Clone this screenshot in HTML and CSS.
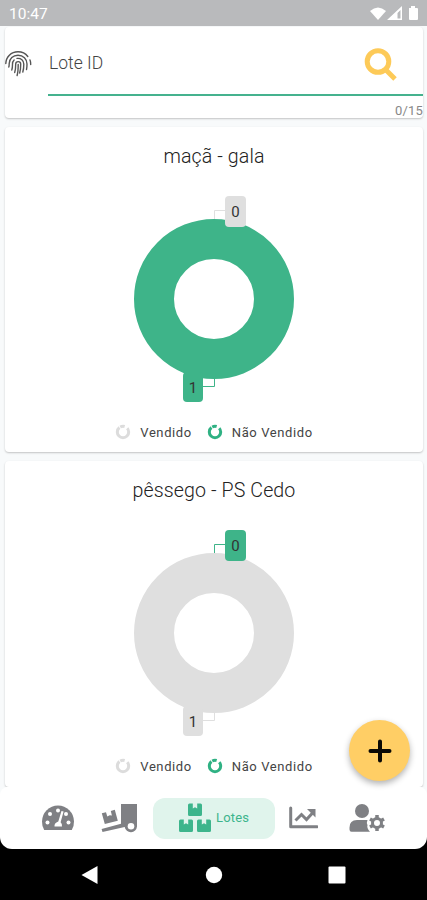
FILE: index.html
```html
<!DOCTYPE html>
<html lang="pt">
<head>
<meta charset="utf-8">
<title>Lotes</title>
<link rel="stylesheet" href="styles.css">
</head>
<body>
<header class="status">
  <span>10:47</span>
  <svg width="50" height="18" viewBox="0 0 50 18" fill="#fff">
    <path d="M0 6Q8 -1 16 6L8 15Z"/>
    <path fill-rule="evenodd" d="M32 1V15H17ZM30.500 5L27.500 8V13.500H30.500Z"/>
    <path d="M39 3h2V1h4v2h2q1 0 1 1v10q0 1-1 1h-7q-1 0-1-1z"/>
  </svg>
</header>
<main class="content">
  <section class="card search">
    <svg class="finger" width="27" height="28" viewBox="0 0 27 28" fill="none" stroke="#555" stroke-width="1.400" stroke-linecap="round">
      <path d="M.8 13.500C1 7 6 1.800 13 1.800c4.500 0 7.700 1.900 9.800 4.700M25 10c.6 1.500.7 3 .7 4.500M3.800 17c.4-1 .4-2 .4-3.500C4.400 8.700 8 5.200 13 5.200c5.200 0 9 3.600 9 8.800 0 2-.1 3.700-.5 5.500M6.800 20c.7-2 .7-4 .7-6 0-1.500.6-2.900 1.600-3.900M12 8.400c4-.5 6.800 2 6.800 5.600 0 3-.2 5.500-1 8M9.700 22.500c.9-2.500 1-5 1-8.500 0-3.200 5-3.200 5 0 0 3.500-.1 6-1 9M13.200 14.500c0 4-.1 7.500-1.100 11"/>
    </svg>
    <div class="field">
      <div class="input"><span>Lote ID</span>
        <svg width="34" height="34" viewBox="0 0 34 34" fill="none" stroke="#fdca58">
          <circle cx="14" cy="13.500" r="10.800" stroke-width="5"/>
          <path d="M22 22L31 31" stroke-width="5"/>
        </svg>
      </div>
      <div class="count">0/15</div>
    </div>
  </section>
  <section class="card lot">
    <h2>maçã - gala</h2>
    <svg class="chart green" width="200" height="220" viewBox="0 0 200 220">
      <circle class="ring" cx="100" cy="109" r="60"/>
      <path class="link top" d="M100.500 29V20.500H111"/>
      <path class="link bottom" d="M100.500 189V196.500H89"/>
      <rect class="tag top" x="111" y="6" width="21" height="31" rx="4"/>
      <rect class="tag bottom" x="69" y="182" width="20" height="30" rx="4"/>
      <text x="121.500" y="26.500">0</text><text x="79" y="202.500">1</text>
    </svg>
    <div class="legend">
      <svg class="off" width="16" height="16" viewBox="0 0 16 16"><circle cx="8" cy="8" r="5.700"/></svg><span class="sold">Vendido</span>
      <svg class="on" width="16" height="16" viewBox="0 0 16 16"><circle cx="8" cy="8" r="5.700"/></svg><span>Não Vendido</span>
    </div>
  </section>
  <section class="card lot">
    <h2>pêssego - PS Cedo</h2>
    <svg class="chart gray" width="200" height="220" viewBox="0 0 200 220">
      <circle class="ring" cx="100" cy="109" r="60"/>
      <path class="link top" d="M100.500 29V20.500H111"/>
      <path class="link bottom" d="M100.500 189V196.500H89"/>
      <rect class="tag top" x="111" y="6" width="21" height="31" rx="4"/>
      <rect class="tag bottom" x="69" y="182" width="20" height="30" rx="4"/>
      <text x="121.500" y="26.500">0</text><text x="79" y="202.500">1</text>
    </svg>
    <div class="legend">
      <svg class="off" width="16" height="16" viewBox="0 0 16 16"><circle cx="8" cy="8" r="5.700"/></svg><span class="sold">Vendido</span>
      <svg class="on" width="16" height="16" viewBox="0 0 16 16"><circle cx="8" cy="8" r="5.700"/></svg><span>Não Vendido</span>
    </div>
  </section>
</main>
<button class="fab" aria-label="Adicionar">
  <svg width="24" height="24" viewBox="0 0 24 24"><path d="M12 2.500V21.500M2.500 12H21.500" stroke="#0b0905" stroke-width="4" stroke-linecap="round"/></svg>
</button>
<footer class="bottom-area">
  <nav class="tabs">
    <svg width="32" height="26" viewBox="0 0 32 26">
      <path fill="#7f8084" d="M2.200 25Q0 22 0 16.500A16 16 0 0 1 32 16.500Q32 22 29.800 25Z"/>
      <g fill="#fff"><circle cx="5.500" cy="17.500" r="2"/><circle cx="8" cy="9" r="2"/><circle cx="16" cy="5.500" r="2"/><circle cx="24" cy="9" r="2"/><circle cx="26.500" cy="17.500" r="2"/><path d="M19.500 6L21.600 6.600 18.600 17.200Q20.300 18.600 20 21.500H12.500Q12 18 16.300 16.500Z"/></g>
    </svg>
    <svg class="truck" width="37" height="30" viewBox="0 0 37 30" fill="#7f8084">
      <path d="M20 1h16v22.500a6.200 6.200 0 0 1-12.300.5L1.500 29 .6 26 20 20.700Z"/><circle cx="30" cy="23.300" r="3.300" fill="#fff"/>
      <path d="M.8 10.300L5 9.200l1.300 4.300 2.400-1.200 2.200.2-1.100-4.600 4-1.100 3 10.900L3.800 21Z"/>
    </svg>
    <div class="active">
      <svg width="33" height="30" viewBox="0 0 33 30" fill="#3db58c">
        <path id="box" d="M10.500.5h3.300v5l2.200-1.300 2.200 1.300v-5h3.300q1.500 0 1.500 1.500v9.500q0 1.500-1.500 1.500h-11Q9 13 9 11.500V2Q9 .5 10.500.5Z"/>
        <use href="#box" x="-9" y="16"/><use href="#box" x="9" y="16"/>
      </svg>
      <span>Lotes</span>
    </div>
    <svg class="trend" width="29" height="24" viewBox="0 0 29 24" fill="none" stroke="#7f8084" stroke-width="3">
      <path d="M1.700 2V20.700H28" stroke-linecap="round" stroke-linejoin="round"/><path d="M6.500 14.500L12.500 8.500 17.500 13.500 24 6.500"/><path d="M18 3h8.500v8.500Z" fill="#7f8084" stroke="none"/>
    </svg>
    <svg class="user" width="36" height="30" viewBox="0 0 36 30">
      <g fill="#7f8084"><circle cx="13" cy="8" r="7"/><path d="M8 17h10.500q-1.200 2.500 0 5-1 3 2.500 6.700H2.500Q.5 28.700.5 26.500V24.500Q.5 17 8 17Z"/></g>
      <circle cx="28" cy="20" r="8.500" fill="#fff"/>
      <circle cx="28" cy="20" r="4.500" fill="none" stroke="#7f8084" stroke-width="3"/>
      <path d="M28 12v3M28 25v3M21 16l2.700 1.500M32.300 22.500L35 24M21 24l2.700-1.500M32.300 17.500L35 16" stroke="#7f8084" stroke-width="3.500"/>
    </svg>
  </nav>
  <div class="system">
    <svg width="18" height="20" viewBox="0 0 18 20"><path d="M.5 10L16.500 1V19Z" fill="#fff"/></svg>
    <svg width="18" height="18" viewBox="0 0 18 18"><circle cx="9" cy="9" r="8.200" fill="#fff"/></svg>
    <svg width="18" height="18" viewBox="0 0 18 18"><rect x=".5" y=".5" width="17" height="17" rx="1" fill="#fff"/></svg>
  </div>
</footer>
</body>
</html>
```
FILE: styles.css
```css
* { box-sizing: border-box; }
body {
  margin: 0;
  width: 427px;
  height: 900px;
  overflow: hidden;
  position: relative;
  display: flex;
  flex-direction: column;
  background: #f8fafb;
  font-family: Roboto, "Liberation Sans", sans-serif;
  font-weight: 400;
  color: #444;
}
svg { display: block; flex: none; }
.status {
  height: 26px;
  flex: none;
  background: #b9babc;
  color: #fff;
  display: flex;
  justify-content: space-between;
  align-items: center;
  padding: 2px 7px 0 9px;
  font-size: 15.5px;
}
.status svg { margin-top: -1px; }
.content {
  height: 761px;
  flex: none;
  padding: 1px 4px 0 5px;
  display: flex;
  flex-direction: column;
  gap: 9px;
}
.card {
  background: #fff;
  border-radius: 4px;
  box-shadow: 0 1px 2px rgba(0, 0, 0, 0.22);
  flex: none;
}
.search { height: 91px; display: flex; }
.finger { margin: 23px 16px 0 0; }
.field { flex: 1; }
.input {
  height: 69px;
  border-bottom: 2px solid #45b28e;
  display: flex;
  justify-content: space-between;
  padding: 0 25px 0 0;
  font-size: 17.5px;
  font-weight: 300;
}
.input span { line-height: 20px; margin: 26px 0 0 1px; }
.input svg { margin-top: 21px; }
.count { text-align: right; font-size: 13px; line-height: 16px; margin-top: 7px; color: #888; letter-spacing: 0.2px; }
.lot { height: 325px; display: flex; flex-direction: column; align-items: center; }
.lot + .lot { height: 326px; }
h2 { margin: 17px 0 0; height: 26px; line-height: 26px; font-size: 19.6px; font-weight: 300; letter-spacing: 0.1px; color: #222; }
.chart { margin-top: 20px; }
.ring { fill: none; stroke-width: 40; }
.link { fill: none; stroke-width: 1; }
.chart text { font-size: 15px; text-anchor: middle; fill: #333; }
.green .ring, .green .link.bottom, .gray .link.top { stroke: #3eb489; }
.green .tag.bottom, .gray .tag.top { fill: #3eb489; }
.gray .ring, .gray .link.bottom, .green .link.top { stroke: #dfdfdf; }
.gray .tag.bottom, .green .tag.top { fill: #dfdfdf; }
.legend { height: 20px; margin-top: 12px; display: flex; align-items: center; font-size: 13px; letter-spacing: 0.6px; }
.legend svg { margin-right: 9px; fill: none; stroke-width: 3; }
.legend circle { stroke-dasharray: 22.4 0.9 4.6 2.9 5.02 0; }
.off { stroke: #dcdcdc; }
.on { stroke: #2fb183; }
.sold { margin-right: 15px; }
.fab {
  position: absolute;
  z-index: 1;
  left: 349px;
  top: 720px;
  width: 61px;
  height: 61px;
  padding: 0;
  border: 0;
  border-radius: 50%;
  background: #ffce65;
  box-shadow: 0 3px 6px rgba(0, 0, 0, 0.3);
  display: flex;
  align-items: center;
  justify-content: center;
}
.bottom-area { flex: none; height: 113px; background: linear-gradient(#f8fafb 30px, #000 30px); }
.tabs {
  height: 62px;
  background: #fff;
  border-radius: 8px 8px 12px 12px;
  display: flex;
  align-items: center;
  padding: 0 42px;
}
.truck { margin-left: 27px; }
.trend { margin-left: 14px; }
.user { margin-left: 31px; }
.active {
  width: 122px;
  height: 41px;
  margin-left: 15px;
  border-radius: 12px;
  background: #e0f4ec;
  color: #3db58c;
  display: flex;
  align-items: center;
  padding-left: 26px;
  gap: 4px;
  font-size: 13px;
}
.active span { margin-top: -2px; letter-spacing: 0.2px; }
.system { height: 51px; display: flex; align-items: center; justify-content: space-between; padding: 0 81px; }
```
